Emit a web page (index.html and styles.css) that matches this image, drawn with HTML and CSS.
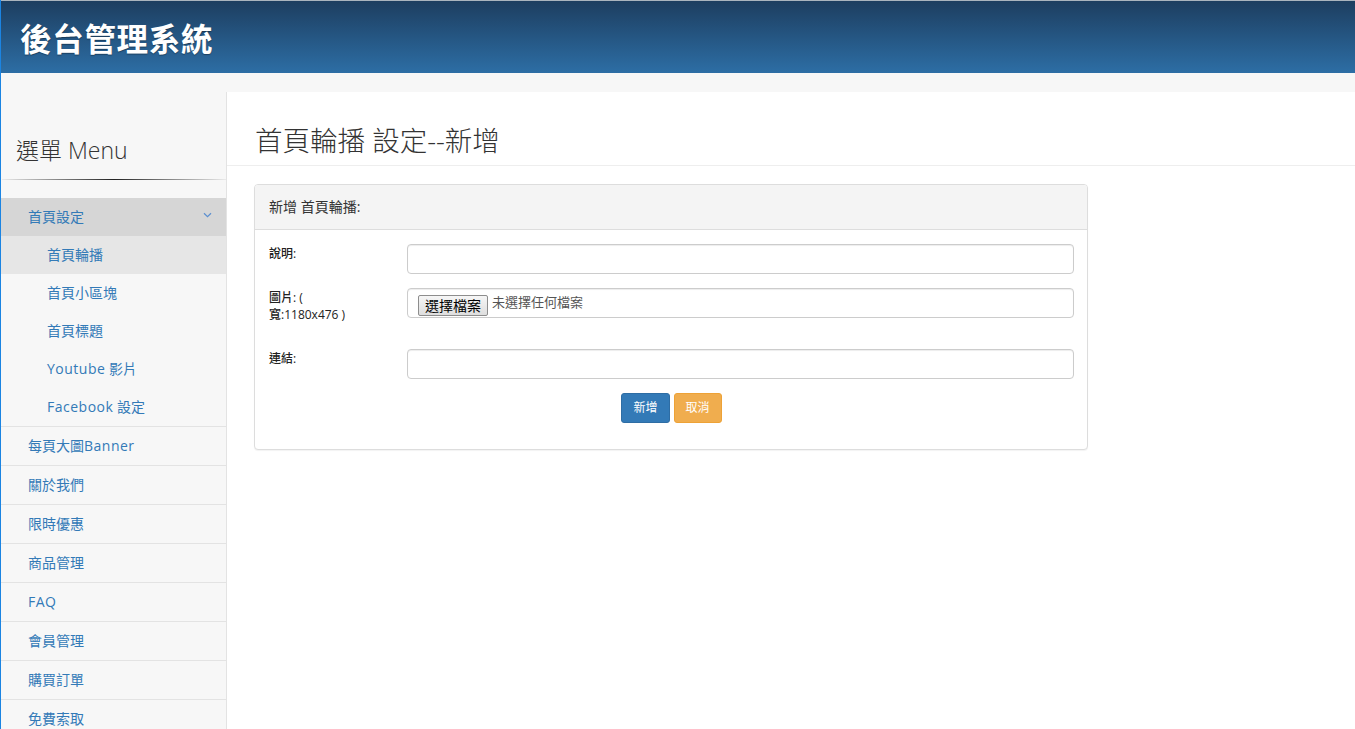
FILE: index.html
```html
<!DOCTYPE html>
<html lang="zh-Hant">
<head>
<meta charset="utf-8">
<title>後台管理系統</title>
<link rel="stylesheet" href="styles.css">
</head>
<body>
<header class="topbar">
  <h1 class="brand">後台管理系統</h1>
</header>
<div class="layout">
  <aside class="sidebar">
    <h2 class="sidebar-title">選單 Menu</h2>
    <div class="sidebar-rule"></div>
    <ul class="menu">
      <li class="menu-group open">
        <a class="menu-link group-head" href="#">首頁設定
          <svg class="chevron" width="9" height="6" viewBox="0 0 9 6"><path d="M1 1.2 L4.5 4.6 L8 1.2" fill="none" stroke="#5b8fd0" stroke-width="1.2"/></svg>
        </a>
        <ul class="submenu">
          <li><a class="sub-link active" href="#">首頁輪播</a></li>
          <li><a class="sub-link" href="#">首頁小區塊</a></li>
          <li><a class="sub-link" href="#">首頁標題</a></li>
          <li><a class="sub-link" href="#"><span class="latin">Youtube</span> 影片</a></li>
          <li><a class="sub-link" href="#"><span class="latin">Facebook</span> 設定</a></li>
        </ul>
      </li>
      <li><a class="menu-link" href="#">每頁大圖<span class="latin">Banner</span></a></li>
      <li><a class="menu-link" href="#">關於我們</a></li>
      <li><a class="menu-link" href="#">限時優惠</a></li>
      <li><a class="menu-link" href="#">商品管理</a></li>
      <li><a class="menu-link" href="#"><span class="latin">FAQ</span></a></li>
      <li><a class="menu-link" href="#">會員管理</a></li>
      <li><a class="menu-link" href="#">購買訂單</a></li>
      <li><a class="menu-link" href="#">免費索取</a></li>
    </ul>
  </aside>
  <main class="content">
    <h1 class="page-header">首頁輪播 設定--新增</h1>
    <section class="panel">
      <div class="panel-heading">新增 首頁輪播:</div>
      <form class="panel-body">
        <div class="form-row">
          <label class="form-label">說明:</label>
          <input class="form-control" type="text">
        </div>
        <div class="form-row tall">
          <label class="form-label">圖片: (<br>寬:1180x476 )</label>
          <div class="form-control file-control">
            <span class="file-button">選擇檔案</span>
            <span class="file-name">未選擇任何檔案</span>
          </div>
        </div>
        <div class="form-row">
          <label class="form-label">連結:</label>
          <input class="form-control" type="text">
        </div>
        <div class="actions">
          <button class="btn btn-primary" type="button">新增</button>
          <button class="btn btn-warning" type="button">取消</button>
        </div>
      </form>
    </section>
  </main>
</div>
</body>
</html>
```
FILE: styles.css
```css
* {
  box-sizing: border-box;
}

html, body {
  height: 100%;
}

body {
  margin: 0;
  border-left: 1px solid #1b84e2;
  background: #f7f7f7;
  font-family: "Open Sans", "Noto Sans CJK TC", sans-serif;
  font-size: 14px;
  color: #333;
  overflow: hidden;
}

/* top bar */
.topbar {
  height: 73px;
  border-top: 1px solid #aab4be;
  background: linear-gradient(to bottom, #1d3e60 0%, #2d6ea5 100%);
  display: flex;
  align-items: center;
  padding-left: 19px;
}

.brand {
  margin: 0;
  font-family: "Noto Sans CJK TC", sans-serif;
  font-size: 31.5px;
  font-weight: 700;
  color: #fff;
  letter-spacing: 0.7px;
  text-shadow: 0 1px 1px rgba(0, 0, 0, 0.35);
}

/* page body */
.layout {
  display: flex;
  padding-top: 19px;
  min-height: calc(100% - 73px);
}

.sidebar {
  width: 226px;
  flex: none;
  border-right: 1px solid #e3e3e3;
  background: #f7f7f7;
}

.sidebar-title {
  margin: 0;
  padding: 44px 0 0 15px;
  font-size: 23px;
  font-weight: 300;
  line-height: 28px;
  color: #333;
}

.sidebar-rule {
  height: 1px;
  margin: 15px 0 18px 1px;
  background: linear-gradient(to right, rgba(0, 0, 0, 0.05), #222 50%, rgba(0, 0, 0, 0.05));
}

.menu,
.submenu {
  list-style: none;
  margin: 0;
  padding: 0;
}

.menu > li {
  border-bottom: 1px solid #e3e3e3;
}

.menu a {
  display: block;
  text-decoration: none;
  color: #337ab7;
  line-height: 38px;
  height: 38px;
}

.menu .latin {
  letter-spacing: 0.5px;
}

.menu-link {
  padding-left: 27px;
}

.group-head {
  position: relative;
  background: #d6d6d6;
}

.chevron {
  position: absolute;
  right: 14px;
  top: 14px;
}

.sub-link {
  padding-left: 46px;
}

.sub-link.active {
  background: #e6e6e6;
}

/* main column */
.content {
  flex: 1;
  background: #fff;
  padding-left: 27px;
}

.page-header {
  margin: 34px 0 18px -27px;
  padding: 0 0 9px 28px;
  border-bottom: 1px solid #eee;
  font-size: 27.5px;
  font-weight: 300;
  line-height: 30px;
  color: #333;
}

.panel {
  width: 834px;
  border: 1px solid #ddd;
  border-radius: 4px;
  background: #fff;
  box-shadow: 0 1px 1px rgba(0, 0, 0, 0.05);
}

.panel-heading {
  padding: 11px 14px;
  line-height: 22px;
  background: #f4f4f4;
  border-bottom: 1px solid #ddd;
  border-radius: 3px 3px 0 0;
  font-size: 14px;
  color: #333;
}

.panel-body {
  padding: 14px 13px 26px 14px;
  margin: 0;
}

.form-row {
  display: flex;
  align-items: flex-start;
  margin-bottom: 14px;
}

.form-row.tall {
  margin-bottom: 26px;
}

.form-label {
  width: 138px;
  flex: none;
  padding-top: 1px;
  font-size: 12px;
  font-weight: 500;
  line-height: 17px;
  color: #222;
}

.form-control {
  flex: 1;
  height: 30px;
  border: 1px solid #ccc;
  border-radius: 4px;
  box-shadow: inset 0 1px 1px rgba(0, 0, 0, 0.075);
  background: #fff;
  font: inherit;
  padding: 6px 12px;
}

.file-control {
  display: flex;
  align-items: flex-start;
  padding: 6px 10px;
}

.file-button {
  display: inline-block;
  height: 21px;
  padding: 0 6px;
  border: 1px solid #8d8d8d;
  border-radius: 2px;
  background: linear-gradient(to bottom, #f6f6f6, #dedede);
  font-family: "Noto Sans CJK TC", sans-serif;
  font-size: 14px;
  line-height: 19px;
  color: #000;
}

.file-name {
  margin-left: 4px;
  font-size: 13px;
  line-height: 15px;
  color: #555;
}

.actions {
  display: flex;
  justify-content: center;
  gap: 4px;
}

.btn {
  height: 30px;
  padding: 5px 11px;
  border: 1px solid transparent;
  border-radius: 3px;
  font: inherit;
  font-size: 12px;
  line-height: 18px;
  color: #fff;
}

.btn-primary {
  background: #337ab7;
  border-color: #2e6da4;
}

.btn-warning {
  background: #f0ad4e;
  border-color: #eea236;
}
```
